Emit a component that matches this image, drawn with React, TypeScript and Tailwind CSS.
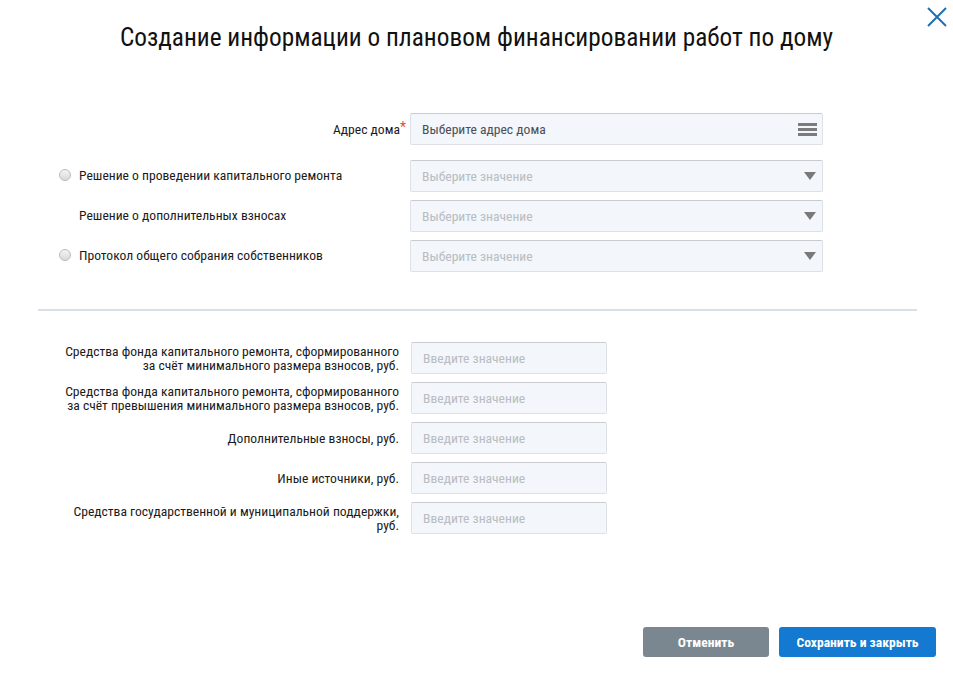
import React from 'react';

const font = "font-['Roboto_Condensed','Liberation_Sans_Narrow','DejaVu_Sans_Condensed',Roboto,sans-serif] [font-stretch:condensed]";

function Radio() {
    return (
        <span className="w-[12px] h-[12px] rounded-full border border-[#b9bcc0] bg-gradient-to-b from-[#f4f4f4] to-[#d9d9d9] shrink-0" />
    );
}

function Caret() {
    return (
        <svg width="12" height="8" viewBox="0 0 12 8" className="shrink-0">
            <path d="M0 0H12L6 8Z" fill="#797979" />
        </svg>
    );
}

function Burger() {
    return (
        <span className="flex flex-col gap-[2px] shrink-0">
            <span className="block w-[19px] h-[3px] bg-[#7b7b7b]" />
            <span className="block w-[19px] h-[3px] bg-[#7b7b7b]" />
            <span className="block w-[19px] h-[3px] bg-[#7b7b7b]" />
        </span>
    );
}

function Field({ text, dark, icon, width }: { text: string; dark?: boolean; icon?: React.ReactNode; width: string }) {
    return (
        <div className={`${width} h-[32px] flex items-center justify-between pl-[11px] pr-[5px] bg-[#f3f6fa] border border-[#dde1e5] border-t-[#c8ccd1] rounded-[2px] text-[13.6px] leading-[16px] ${dark ? 'text-[#4a4f55]' : 'text-[#b9bcc1]'}`}>
            <span>{text}</span>
            {icon}
        </div>
    );
}

const selects = [
    { label: 'Решение о проведении капитального ремонта', radio: true },
    { label: 'Решение о дополнительных взносах', radio: false },
    { label: 'Протокол общего собрания собственников', radio: true },
];

const amounts = [
    ['Средства фонда капитального ремонта, сформированного', 'за счёт минимального размера взносов, руб.'],
    ['Средства фонда капитального ремонта, сформированного', 'за счёт превышения минимального размера взносов, руб.'],
    ['Дополнительные взносы, руб.'],
    ['Иные источники, руб.'],
    ['Средства государственной и муниципальной поддержки,', 'руб.'],
];

export default function App() {
    return (
        <div className={`relative w-[953px] h-[674px] bg-white text-[#1b1b1b] flex flex-col ${font}`}>
            {/* close */}
            <button className="absolute top-[7px] right-[6px] w-[20px] h-[20px]">
                <svg width="20" height="20" viewBox="0 0 20 20">
                    <path d="M1 1L19 19M19 1L1 19" stroke="#1f6fb2" strokeWidth="2" />
                </svg>
            </button>

            <h1 className="pt-[20px] text-center text-[25.3px] leading-[36px] text-[#111]">
                Создание информации о плановом финансировании работ по дому
            </h1>

            {/* Selectors */}
            <div className="mt-[57px] flex flex-col text-[13.6px] leading-[16px]">
                <div className="flex items-center">
                    <div className="w-[410px] pr-[4px] text-right">
                        Адрес дома<span className="text-[#e0502a] align-top text-[14px] leading-[12px]">*</span>
                    </div>
                    <Field width="w-[413px]" text="Выберите адрес дома" dark icon={<Burger />} />
                </div>
                <div className="mt-[15px] flex flex-col gap-[8px]">
                    {selects.map((s) => (
                        <div key={s.label} className="flex items-center">
                            <div className={`w-[410px] flex items-center gap-[8px] ${s.radio ? 'pl-[59px]' : 'pl-[79px]'} -mt-[2px]`}>
                                {s.radio && <Radio />}
                                <span>{s.label}</span>
                            </div>
                            <Field width="w-[413px]" text="Выберите значение" icon={<span className="pr-[1px]"><Caret /></span>} />
                        </div>
                    ))}
                </div>
            </div>

            <div className="mt-[37px] ml-[38px] mr-[36px] h-[2px] bg-[#d8dfe6]" />

            {/* Amounts */}
            <div className="mt-[31px] flex flex-col gap-[8px] text-[13.6px] leading-[14px]">
                {amounts.map((lines, i) => (
                    <div key={i} className="flex items-center">
                        <div className="w-[411px] pr-[12px] text-right">
                            {lines.map((l) => (
                                <div key={l}>{l}</div>
                            ))}
                        </div>
                        <Field width="w-[196px]" text="Введите значение" />
                    </div>
                ))}
            </div>

            <div className="mt-auto mb-[17px] mr-[17px] flex justify-end gap-[10px] text-[13.6px] font-bold text-white">
                <button className="w-[126px] h-[30px] rounded-[3px] bg-[#7a8791]">Отменить</button>
                <button className="w-[157px] h-[30px] rounded-[3px] bg-[#1479d0]">Сохранить и закрыть</button>
            </div>
        </div>
    );
}
